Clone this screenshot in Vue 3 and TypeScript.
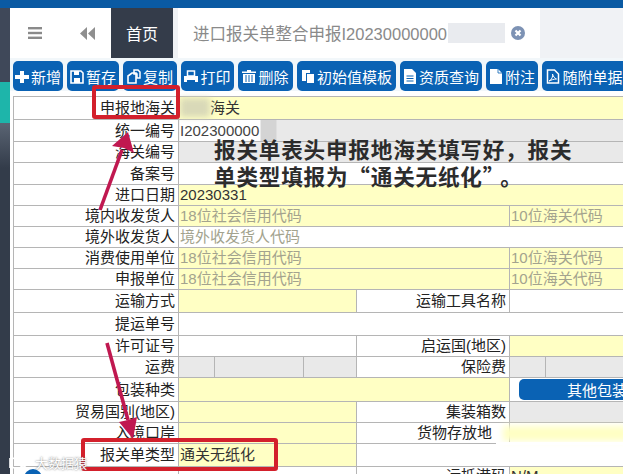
<template>
  <div class="page">
    <div class="top-bar"></div>
    <div class="body">
      <div class="sidebar">
        <div class="side-dark"></div>
        <div class="side-teal"></div>
        <div class="side-fade"></div>
      </div>
      <div class="main">
        <div class="tabs">
          <div class="tab-tools">
            <svg class="menu-icon" width="14" height="12" viewBox="0 0 14 12" fill="#8a8a8a">
              <rect y="0" width="14" height="2.4" />
              <rect y="4.8" width="14" height="2.4" />
              <rect y="9.6" width="14" height="2.4" />
            </svg>
            <svg class="back-icon" width="15" height="13" viewBox="0 0 15 13" fill="#8f8f8f">
              <path d="M7 0v13L0 6.5zM15 0v13L8 6.5z" />
            </svg>
          </div>
          <div class="tab home">首页</div>
          <div class="tab current">
            <span class="tab-title">进口报关单整合申报I20230000000</span>
            <span class="tab-mask"></span>
            <svg class="tab-close" width="14" height="14" viewBox="0 0 14 14">
              <circle cx="7" cy="7" r="7" fill="#7d92b4" />
              <path d="M4.5 4.5l5 5M9.5 4.5l-5 5" stroke="#fff" stroke-width="2.2" />
            </svg>
          </div>
          <div class="tab-rest"></div>
        </div>

        <div class="toolbar">
          <button v-for="b in buttons" :key="b.label" class="tool-btn" :style="{ width: b.width + 'px' }">
            <svg width="14" height="15" viewBox="0 0 14 15" class="tool-icon" v-html="b.icon"></svg>
            <span>{{ b.label }}</span>
          </button>
        </div>

        <table class="form">
          <colgroup>
            <col v-for="(w, i) in colWidths" :key="i" :style="{ width: w + 'px' }" />
          </colgroup>
          <tbody>
            <tr v-for="(row, i) in rows" :key="i" :style="{ height: row.h + 'px' }">
              <td
                v-for="(c, j) in row.cells"
                :key="j"
                :colspan="c.span || 1"
                :class="c.cls"
              >
                <button v-if="c.cls === 'btn-cell'" class="wide-btn">{{ c.text }}</button>
                <template v-else>{{ c.text }}</template>
              </td>
            </tr>
          </tbody>
        </table>
      </div>
    </div>

    <!-- 标注层 -->
    <div class="blur-a"></div>
    <div class="blur-b"></div>
    <div class="blur-c"></div>
    <div class="note">报关单表头申报地海关填写好，报关<br />单类型填报为“通关无纸化<span class="quote-end">”</span>。</div>
    <svg class="arrows" width="623" height="474" viewBox="0 0 623 474">
      <g stroke="#c01850" stroke-width="3.6" fill="#c01850">
        <line x1="100" y1="210" x2="122" y2="150" />
        <line x1="107" y1="343" x2="128" y2="420" />
      </g>
      <g fill="#c01850">
        <path d="M128 132l6 21-10-5-12-2z" />
        <path d="M133 439l-14-17 9-2 9-3z" />
      </g>
    </svg>
    <div class="red-box box-one"></div>
    <div class="red-box box-two"></div>
    <div class="watermark">
      <svg width="24" height="14" viewBox="0 0 24 14" fill="none" stroke="#fff" stroke-width="1.6">
        <path d="M2 2v10M7 12a5 5 0 1 1 3-9M15 5a3 3 0 1 0 .1 0M20 3a2 2 0 1 0 .1 0" />
      </svg>
      <span>大数据猿</span>
    </div>
    <div class="blue-dot"></div>
  </div>
</template>

<script setup lang="ts">
interface Cell {
  text?: string
  span?: number
  cls?: string
}

interface Row {
  h: number
  cells: Cell[]
}

const colWidths = [165, 36, 89, 53, 153, 36, 78]

const icons = {
  plus: '<path d="M5 2h4v4h5v4H9v4H5v-4H0V6h5z" fill="#fff"/>',
  save: '<path d="M1 2h10l2 2v10H1z" fill="none" stroke="#fff" stroke-width="1.6"/><rect x="4" y="2" width="5" height="4" fill="#fff"/><rect x="4" y="9" width="6" height="5" fill="#fff"/>',
  copy: '<path d="M7 1h4l2 2v6h-3V5H7z" fill="none" stroke="#fff" stroke-width="1.5"/><path d="M1 7l4-3h4v10H1z" fill="none" stroke="#fff" stroke-width="1.6"/>',
  print: '<rect x="3.5" y="2" width="7" height="5" fill="none" stroke="#fff" stroke-width="1.5"/><path d="M0 7h14v6H11v-2H3v2H0z" fill="#fff"/>',
  trash: '<path d="M5 1h4v1.5h5V4H0V2.500h5zM1 5h12v9H1z" fill="#fff"/><path d="M4 6v7M7 6v7M10 6v7" stroke="#0a62b4" stroke-width="1"/>',
  clone: '<path d="M1 1h8v3H5v8H1z" fill="#fff"/><path d="M6 5h7v9H6z" fill="#fff"/>',
  text: '<path d="M1 0h8l4 4v11H1z" fill="#fff"/><path d="M3.500 7h7M3.500 9.500h7M3.500 12h7" stroke="#0a62b4" stroke-width="1.100"/>',
  file: '<path d="M1 0h8l4 4v11H1z" fill="#fff"/><path d="M9 0v4h4" fill="none" stroke="#0a62b4" stroke-width=".8"/>',
  pdf: '<path d="M1.500 1h7l4 4v9h-11z" fill="none" stroke="#fff" stroke-width="1.500"/><path d="M3 12c3-1 4-5 3.500-7 1 3 2 4 4 5-3 0-5 1-7.500 2z" fill="none" stroke="#fff" stroke-width="1"/>',
}

const buttons = [
  { label: '新增', width: 50, icon: icons.plus },
  { label: '暂存', width: 52, icon: icons.save },
  { label: '复制', width: 54, icon: icons.copy },
  { label: '打印', width: 53, icon: icons.print },
  { label: '删除', width: 55, icon: icons.trash },
  { label: '初始值模板', width: 99, icon: icons.clone },
  { label: '资质查询', width: 82, icon: icons.text },
  { label: '附注', width: 52, icon: icons.file },
  { label: '随附单据', width: 85, icon: icons.pdf },
]

const label = (text: string, extra = ''): Cell => ({ text, cls: `label ${extra}` })
const ph = 'ph'

const rows: Row[] = [
  { h: 23, cells: [label('申报地海关'), { text: '\u3000\u3000海关', span: 6, cls: 'yellow' }] },
  { h: 22, cells: [label('统一编号'), { text: 'I202300000', span: 6, cls: 'plain' }] },
  { h: 21, cells: [label('海关编号'), { span: 6, cls: 'gray' }] },
  { h: 22, cells: [label('备案号'), { span: 6 }] },
  { h: 21, cells: [label('进口日期'), { text: '20230331', span: 6, cls: 'yellow' }] },
  { h: 21, cells: [label('境内收发货人'), { text: '18位社会信用代码', span: 4, cls: 'yellow ph' }, { text: '10位海关代码', span: 2, cls: 'yellow ph' }] },
  { h: 21, cells: [label('境外收发货人'), { text: '境外收发货人代码', span: 6, cls: ph }] },
  { h: 21, cells: [label('消费使用单位'), { text: '18位社会信用代码', span: 4, cls: 'yellow ph' }, { text: '10位海关代码', span: 2, cls: 'yellow ph' }] },
  { h: 21, cells: [label('申报单位'), { text: '18位社会信用代码', span: 4, cls: 'yellow ph' }, { text: '10位海关代码', span: 2, cls: 'yellow ph' }] },
  { h: 23, cells: [label('运输方式'), { span: 3, cls: 'yellow' }, label('运输工具名称'), { span: 2 }] },
  { h: 23, cells: [label('提运单号'), { span: 6 }] },
  { h: 21, cells: [label('许可证号'), { span: 3 }, label('启运国(地区)'), { span: 2, cls: 'yellow' }] },
  { h: 21, cells: [label('运费'), { cls: 'gray' }, { cls: 'gray' }, { cls: 'gray' }, label('保险费'), { cls: 'gray' }, { cls: 'gray' }] },
  { h: 24, cells: [label('包装种类'), { span: 4, cls: 'yellow' }, { text: '其他包装', span: 2, cls: 'btn-cell' }] },
  { h: 21, cells: [label('贸易国别(地区)'), { span: 3, cls: 'yellow' }, label('集装箱数'), { span: 2, cls: 'gray' }] },
  { h: 21, cells: [label('入境口岸'), { span: 3, cls: 'yellow' }, label('货物存放地', 'store'), { span: 2 }] },
  { h: 23, cells: [label('报关单类型'), { text: '通关无纸化', span: 3, cls: 'yellow' }, { span: 3 }] },
  { h: 30, cells: [label('', 'top'), { span: 3 }, label('运抵港码', 'top'), { text: 'N/M', span: 2, cls: 'yellow top' }] },
]
</script>

<style scoped>
.page {
  position: relative;
  width: 623px;
  height: 474px;
  overflow: hidden;
  background: #fff;
  font-family: "Liberation Sans", "Noto Sans CJK SC", sans-serif;
  color: #222;
}

.top-bar {
  height: 8px;
  background: #0a5aa3;
}

.body {
  display: flex;
  height: 466px;
}

.sidebar {
  width: 10px;
  flex: none;
  display: flex;
  flex-direction: column;
}

.side-dark {
  height: 74px;
  background: #3f4859;
}

.side-teal {
  height: 41px;
  background: #1eb5aa;
}

.side-fade {
  flex: 1;
  background: linear-gradient(#5a6473 0, #333c4a 45px);
}

.main {
  flex: 1;
  min-width: 0;
}

.tabs {
  display: flex;
  height: 50px;
  background: #f0f2f5;
}

.tab-tools {
  width: 101px;
  display: flex;
  align-items: center;
  background: #fff;
}

.menu-icon {
  margin-left: 18px;
}

.back-icon {
  margin-left: 38px;
}

.tab {
  display: flex;
  align-items: center;
  font-size: 16px;
}

.home {
  width: 62px;
  justify-content: center;
  background: #343c4a;
  color: #fff;
}

.current {
  position: relative;
  width: 362px;
  margin-left: 5px;
  padding-left: 15px;
  box-sizing: border-box;
  background: #fff;
  color: #8a8a8a;
  font-size: 16.5px;
}

.tab-mask {
  position: absolute;
  left: 270px;
  top: 15px;
  width: 57px;
  height: 20px;
  background: #e9ebef;
}

.tab-close {
  position: absolute;
  left: 333px;
  top: 18px;
}

.tab-rest {
  flex: 1;
}

.toolbar {
  display: flex;
  gap: 4px;
  height: 33px;
  padding: 3px 0 0 3px;
  box-sizing: border-box;
  background: #f2f7fa;
  overflow: hidden;
}

.tool-btn {
  flex: none;
  display: flex;
  align-items: center;
  justify-content: center;
  gap: 2px;
  height: 30px;
  padding: 0;
  border: 0;
  border-radius: 5px;
  background: #0a62b4;
  color: #fff;
  font-family: inherit;
  font-size: 15px;
  white-space: nowrap;
}

.tool-icon {
  flex: none;
}

.form {
  width: 610px;
  margin: 5px 0 0 3px;
  table-layout: fixed;
  border-collapse: collapse;
  font-size: 15px;
}

.form td {
  padding: 0 0 0 1px;
  border: 1px solid #b5b5b5;
  white-space: nowrap;
  overflow: hidden;
  line-height: 18px;
}

.form .label {
  padding: 0 3px 0 0;
  text-align: right;
  color: #222;
}

.form .store {
  padding-right: 17px;
}

.form .top {
  vertical-align: top;
}

.yellow {
  background: #ffffc4;
  color: #333;
}

.gray {
  background: #e9e9e9;
}

.plain {
  color: #444;
  background: linear-gradient(90deg, #fff 81px, #d4d4d4 81px, #d4d4d4 97px, #e9e9e9 97px);
}

.ph {
  color: #a3a38e;
}

.form td.btn-cell {
  padding: 0;
  text-align: right;
}

.wide-btn {
  display: block;
  width: 105px;
  height: 21px;
  margin-left: 9px;
  padding: 0 0 0 48px;
  border: 0;
  border-radius: 5px 0 0 5px;
  background: #0a62b4;
  color: #fff;
  font-family: inherit;
  font-size: 15px;
  white-space: nowrap;
  text-align: left;
}

.note {
  position: absolute;
  left: 214px;
  top: 135px;
  font-family: "Noto Sans CJK SC", sans-serif;
  font-size: 21.6px;
  font-weight: 700;
  line-height: 27px;
  letter-spacing: 0.8px;
  color: #2c2c2c;
}

.quote-end {
  margin-right: 6px;
}

.red-box {
  position: absolute;
  box-sizing: border-box;
  border: 4px solid #d3202c;
  border-radius: 3px;
}

.box-one {
  left: 92px;
  top: 85px;
  width: 88px;
  height: 34px;
}

.box-two {
  left: 81px;
  top: 438px;
  width: 197px;
  height: 33px;
}

.arrows {
  position: absolute;
  left: 0;
  top: 0;
}

.blur-a {
  position: absolute;
  left: 180px;
  top: 98px;
  width: 30px;
  height: 19px;
  background: #d9d9b8;
  filter: blur(3px);
}

.blur-b {
  position: absolute;
  left: 503px;
  top: 426px;
  width: 125px;
  height: 15px;
  background: #ffffc4;
  filter: blur(3px);
}

.blur-c {
  position: absolute;
  left: 496px;
  top: 442px;
  width: 127px;
  height: 3px;
  background: #fff;
}

.watermark {
  position: absolute;
  left: 8px;
  top: 453px;
  display: flex;
  align-items: center;
  gap: 3px;
  color: #fff;
  font-size: 13px;
  text-shadow: 0 0 2px #666;
}

.blue-dot {
  position: absolute;
  left: 24px;
  top: 469px;
  width: 18px;
  height: 18px;
  border-radius: 50%;
  background: #0a62b4;
}
</style>
